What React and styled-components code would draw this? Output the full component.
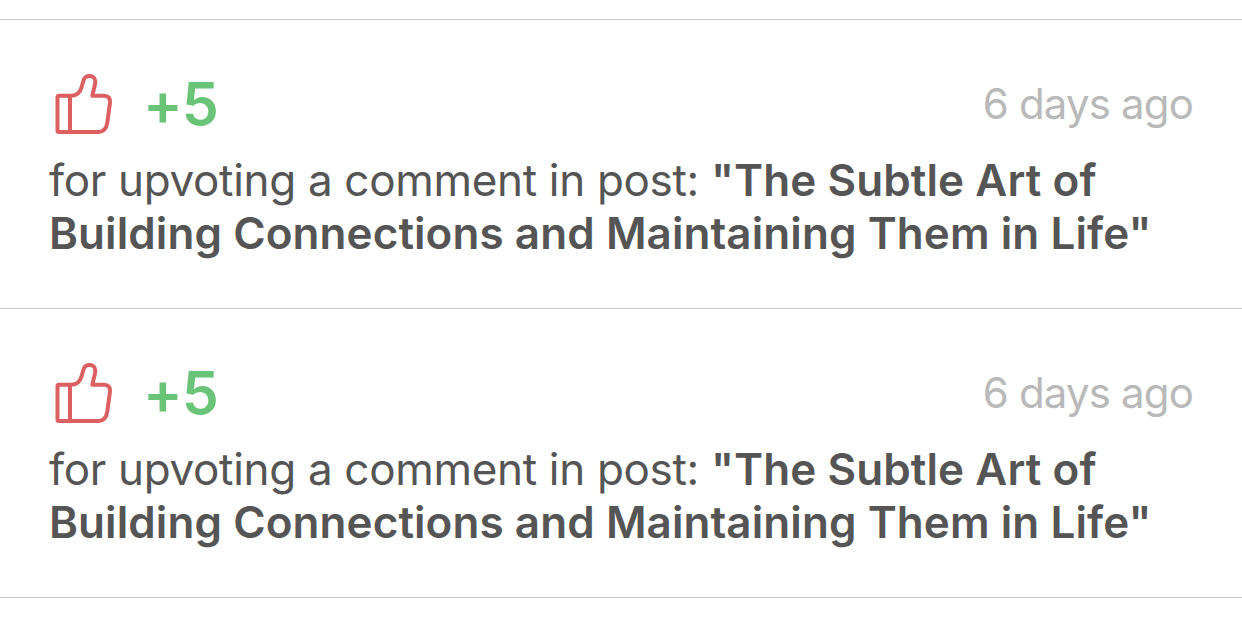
import React from "react";
//styled components
import styled, { createGlobalStyle } from "styled-components";

const activities = [
  {
    id: 1,
    points: "+5",
    time: "6 days ago",
    reason: "for upvoting a comment in post:",
    title: ['"The Subtle Art of', 'Building Connections and Maintaining Them in Life"'],
  },
  {
    id: 2,
    points: "+5",
    time: "6 days ago",
    reason: "for upvoting a comment in post:",
    title: ['"The Subtle Art of', 'Building Connections and Maintaining Them in Life"'],
  },
];

const ThumbIcon = () => (
  <Thumb viewBox="0 0 60 62">
    <path d="M5 22.800H17.500C22.500 22.500 26 19.500 27.300 15L29.500 7.500C30.800 1.200 41.300 1.200 41.300 8.500C41.300 12 39.500 17 38.300 22.800H50C54.500 22.800 56.400 25.500 56 29.500L53.300 49.500C52.400 55.500 50 58.900 44.500 58.900H5Q3.500 58.900 3.500 57.400V24.300Q3.500 22.800 5 22.800Z" />
    <path d="M16 22.800V58.900" />
  </Thumb>
);

const App = () => {
  return (
    <>
      <GlobalStyle />
      <ActivityList>
        {activities.map(({ id, points, time, reason, title }) => (
          <Activity key={id}>
            <Header>
              <ThumbIcon />
              <Points>{points}</Points>
              <Time>{time}</Time>
            </Header>
            <Description>
              <Line>
                {reason} <Title>{title[0]}</Title>
              </Line>
              <Line>
                <Title>{title[1]}</Title>
              </Line>
            </Description>
          </Activity>
        ))}
      </ActivityList>
    </>
  );
};

const GlobalStyle = createGlobalStyle`
  * {
    box-sizing: border-box;
  }
  body {
    margin: 0;
    background: #fff;
    color: #555;
    font-family: Inter, sans-serif;
    font-feature-settings: "calt" 0;
    overflow: hidden;
  }
`;

const ActivityList = styled.ul`
  list-style: none;
  margin: 19px 0 0;
  padding: 0;
  border-bottom: 1px solid #c8c8c8;
`;

const Activity = styled.li`
  height: 289px;
  padding: 48px 49px 0;
  border-top: 1px solid #c8c8c8;
`;

const Header = styled.div`
  display: flex;
  align-items: center;
  height: 72px;
`;

const Thumb = styled.svg`
  width: 60px;
  height: 62px;
  margin-left: 5px;
  fill: none;
  stroke: #dc6062;
  stroke-width: 4;
  stroke-linejoin: round;
  stroke-linecap: round;
`;

const Points = styled.span`
  margin-left: 29px;
  padding-bottom: 1px;
  color: #6ac477;
  font-size: 59px;
  font-weight: 600;
  letter-spacing: -1px;
`;

const Time = styled.time`
  margin-left: auto;
  padding-bottom: 1px;
  color: #b9b9b9;
  font-size: 42px;
  letter-spacing: -0.85px;
`;

const Description = styled.p`
  margin: 14px 0 0;
  font-size: 44px;
  line-height: 53px;
`;

const Line = styled.span`
  display: block;
  white-space: nowrap;
  letter-spacing: -0.32px;
`;

const Title = styled.strong`
  font-weight: 600;
  letter-spacing: 0.08px;
`;

export default App;
